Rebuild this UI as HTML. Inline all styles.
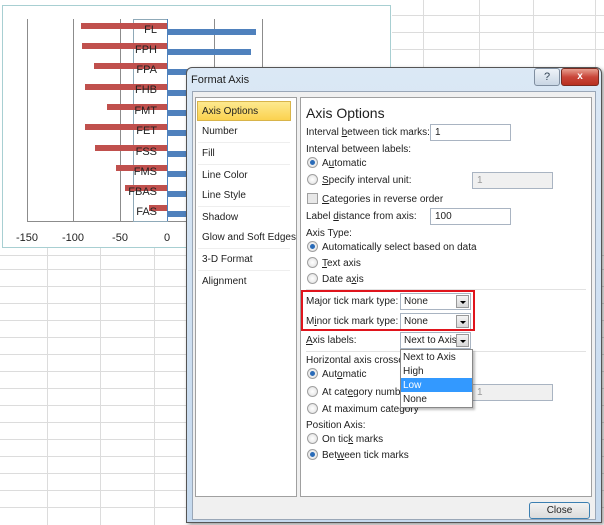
<!DOCTYPE html>
<html><head><meta charset="utf-8"><style>
*{margin:0;padding:0;box-sizing:border-box}
body{width:604px;height:525px;overflow:hidden;position:relative;background:#fff;font-family:"Liberation Sans",sans-serif;font-size:10px;color:#1e1e1e}
.a{position:absolute}
.t{position:absolute;white-space:nowrap;line-height:13px}
.rad{position:absolute;width:11px;height:11px;border-radius:50%;border:1px solid #a0a0a0;background:radial-gradient(#fff,#ddd)}
.rad.on::after{content:"";position:absolute;left:2px;top:2px;width:5px;height:5px;border-radius:50%;background:#2a6bb8}
.inp{position:absolute;border:1px solid #a9b4c2;background:#fff;height:17px;padding-left:4px;line-height:15px}
.dis{background:#f0f0f0;color:#999}
.dd{position:absolute;border:1px solid #a9b4c2;background:#fff;height:17px;padding-left:3px;line-height:15px}
.dd i{position:absolute;right:1px;top:1px;width:13px;height:13px;background:linear-gradient(#f4f4f4,#d8d8d8);border:1px solid #999}
.dd i::after{content:"";position:absolute;left:3px;top:5px;border-left:3px solid transparent;border-right:3px solid transparent;border-top:3px solid #000}
.li{position:absolute;left:202px}
</style></head><body>
<svg class="a" style="left:0;top:0" width="604" height="525">
<g stroke="#dcdcdc" stroke-width="1">
<line x1="0" y1="255.5" x2="604" y2="255.5"/>
<line x1="0" y1="269.5" x2="604" y2="269.5"/>
<line x1="0" y1="286.5" x2="604" y2="286.5"/>
<line x1="0" y1="303.5" x2="604" y2="303.5"/>
<line x1="0" y1="320.5" x2="604" y2="320.5"/>
<line x1="0" y1="337.5" x2="604" y2="337.5"/>
<line x1="0" y1="354.5" x2="604" y2="354.5"/>
<line x1="0" y1="371.5" x2="604" y2="371.5"/>
<line x1="0" y1="388.5" x2="604" y2="388.5"/>
<line x1="0" y1="405.5" x2="604" y2="405.5"/>
<line x1="0" y1="422.5" x2="604" y2="422.5"/>
<line x1="0" y1="439.5" x2="604" y2="439.5"/>
<line x1="0" y1="456.5" x2="604" y2="456.5"/>
<line x1="0" y1="473.5" x2="604" y2="473.5"/>
<line x1="0" y1="490.5" x2="604" y2="490.5"/>
<line x1="0" y1="507.5" x2="604" y2="507.5"/>
<line x1="47.5" y1="248" x2="47.5" y2="525"/>
<line x1="100.5" y1="248" x2="100.5" y2="525"/>
<line x1="154.5" y1="248" x2="154.5" y2="525"/>
<line x1="392" y1="15.5" x2="604" y2="15.5"/>
<line x1="392" y1="32.5" x2="604" y2="32.5"/>
<line x1="392" y1="49.5" x2="604" y2="49.5"/>
<line x1="423.5" y1="0" x2="423.5" y2="67"/>
<line x1="479.5" y1="0" x2="479.5" y2="67"/>
<line x1="533.5" y1="0" x2="533.5" y2="67"/>
<line x1="595.5" y1="0" x2="595.5" y2="67"/>
</g>
<rect x="2.5" y="5.5" width="388" height="242" fill="#fff" stroke="#a8cfd2"/>
<g stroke="#8c8c8c"><line x1="27.5" y1="19" x2="27.5" y2="221"/><line x1="73.5" y1="19" x2="73.5" y2="221"/><line x1="120.5" y1="19" x2="120.5" y2="221"/><line x1="214.5" y1="19" x2="214.5" y2="221"/><line x1="262.5" y1="19" x2="262.5" y2="221"/><line x1="27" y1="221.5" x2="262" y2="221.5"/></g>
<rect x="133.5" y="19.5" width="34" height="202" fill="none" stroke="#8fa9b8"/>
<g fill="#c0504d">
<rect x="81" y="23" width="86" height="6"/><rect x="82" y="43" width="85" height="6"/><rect x="94" y="63" width="73" height="6"/><rect x="85" y="84" width="82" height="6"/><rect x="107" y="104" width="60" height="6"/><rect x="85" y="124" width="82" height="6"/><rect x="95" y="145" width="72" height="6"/><rect x="116" y="165" width="51" height="6"/><rect x="125" y="185" width="42" height="6"/><rect x="149" y="205" width="18" height="6"/></g>
<g fill="#4f81bd">
<rect x="168" y="29" width="88" height="6"/><rect x="168" y="49" width="83" height="6"/><rect x="168" y="69" width="20" height="6"/><rect x="168" y="90" width="20" height="6"/><rect x="168" y="110" width="20" height="6"/><rect x="168" y="130" width="20" height="6"/><rect x="168" y="151" width="20" height="6"/><rect x="168" y="171" width="20" height="6"/><rect x="168" y="191" width="20" height="6"/><rect x="168" y="211" width="20" height="6"/></g>
<line x1="167.5" y1="19" x2="167.5" y2="221" stroke="#4f81bd" stroke-width="1"/>
<g font-family="Liberation Sans" font-size="11" fill="#222" text-anchor="end">
<text x="157" y="33">FL</text><text x="157" y="53">FPH</text><text x="157" y="73">FPA</text><text x="157" y="93">FHB</text><text x="157" y="114">FMT</text><text x="157" y="134">FET</text><text x="157" y="155">FSS</text><text x="157" y="175">FMS</text><text x="157" y="195">FBAS</text><text x="157" y="215">FAS</text></g>
<g font-family="Liberation Sans" font-size="11" fill="#222" text-anchor="middle">
<text x="27" y="241">-150</text><text x="73" y="241">-100</text><text x="120" y="241">-50</text><text x="167" y="241">0</text></g>
</svg>
<div class="a" style="left:186px;top:67px;width:416px;height:456px;background:linear-gradient(#dbe8f5,#c5d9ee);border:1px solid #555;border-radius:6px 6px 0 0;box-shadow:2px 2px 4px rgba(0,0,0,.4)"></div>
<div class="t" style="left:191px;top:74px;font-size:11px">Format Axis</div>
<div class="a" style="left:534px;top:68px;width:26px;height:18px;border:1px solid #7f8ea0;border-radius:3px;background:linear-gradient(#eef3f8,#c9d6e4);text-align:center;font-size:11px;line-height:16px;color:#345">?</div>
<div class="a" style="left:561px;top:68px;width:38px;height:18px;border:1px solid #7a2a20;border-radius:3px;background:linear-gradient(#e8a090,#c9463a 50%,#b83020);text-align:center;color:#fff;font-weight:bold;line-height:16px">x</div>
<div class="a" style="left:192px;top:91px;width:404px;height:429px;background:#f0f0f0;border:1px solid #9aa7b7"></div>
<div class="a" style="left:195px;top:97px;width:102px;height:400px;background:#fff;border:1px solid #a0a0a0"></div>
<div class="a" style="left:300px;top:97px;width:292px;height:400px;background:#fff;border:1px solid #a0a0a0"></div>
<div class="a" style="left:197px;top:101px;width:94px;height:20px;background:linear-gradient(#fde98f,#fbd24f);border:1px solid #d8b44a"></div>
<div class="t li" style="top:105px">Axis Options</div>
<div class="t li" style="top:125px">Number</div>
<div class="t li" style="top:147px">Fill</div>
<div class="t li" style="top:169px">Line Color</div>
<div class="t li" style="top:189px">Line Style</div>
<div class="t li" style="top:211px">Shadow</div>
<div class="t li" style="top:231px">Glow and Soft Edges</div>
<div class="t li" style="top:253px">3-D Format</div>
<div class="t li" style="top:275px">Alignment</div>
<div class="a" style="left:198px;top:142px;width:92px;border-top:1px solid #eee"></div>
<div class="a" style="left:198px;top:164px;width:92px;border-top:1px solid #eee"></div>
<div class="a" style="left:198px;top:206px;width:92px;border-top:1px solid #eee"></div>
<div class="a" style="left:198px;top:248px;width:92px;border-top:1px solid #eee"></div>
<div class="a" style="left:198px;top:270px;width:92px;border-top:1px solid #eee"></div>

<div class="t" style="left:306px;top:105px;font-size:14px;line-height:17px">Axis Options</div>
<div class="t" style="left:306px;top:126px">Interval <u>b</u>etween tick marks:</div>
<div class="inp" style="left:430px;top:124px;width:81px">1</div>
<div class="t" style="left:306px;top:143px">Interval between labels:</div>
<div class="rad on" style="left:307px;top:157px"></div><div class="t" style="left:322px;top:157px">A<u>u</u>tomatic</div>
<div class="rad" style="left:307px;top:174px"></div><div class="t" style="left:322px;top:174px"><u>S</u>pecify interval unit:</div>
<div class="inp dis" style="left:472px;top:172px;width:81px">1</div>
<div class="a" style="left:307px;top:193px;width:11px;height:11px;border:1px solid #a0a0a0;background:#e8e8e8"></div><div class="t" style="left:322px;top:193px"><u>C</u>ategories in reverse order</div>
<div class="t" style="left:306px;top:210px">Label <u>d</u>istance from axis:</div>
<div class="inp" style="left:430px;top:208px;width:81px">100</div>
<div class="t" style="left:306px;top:227px">Axis Type:</div>
<div class="rad on" style="left:307px;top:241px"></div><div class="t" style="left:322px;top:241px">Automatically select based on data</div>
<div class="rad" style="left:307px;top:257px"></div><div class="t" style="left:322px;top:257px"><u>T</u>ext axis</div>
<div class="rad" style="left:307px;top:273px"></div><div class="t" style="left:322px;top:273px">Date a<u>x</u>is</div>
<div class="a" style="left:306px;top:289px;width:280px;border-top:1px solid #e2e2e2"></div>
<div class="t" style="left:306px;top:295px">Major tick mark type:</div>
<div class="dd" style="left:400px;top:293px;width:71px">None<i></i></div>
<div class="t" style="left:306px;top:315px">M<u>i</u>nor tick mark type:</div>
<div class="dd" style="left:400px;top:313px;width:71px">None<i></i></div>
<div class="a" style="left:301px;top:290px;width:174px;height:41px;border:2px solid #e0141c"></div>
<div class="t" style="left:306px;top:334px"><u>A</u>xis labels:</div>
<div class="dd" style="left:400px;top:332px;width:71px">Next to Axis<i></i></div>
<div class="a" style="left:306px;top:351px;width:280px;border-top:1px solid #e2e2e2"></div>
<div class="t" style="left:306px;top:354px">Horizontal axis crosses:</div>
<div class="rad on" style="left:307px;top:368px"></div><div class="t" style="left:322px;top:368px">Aut<u>o</u>matic</div>
<div class="rad" style="left:307px;top:386px"></div><div class="t" style="left:322px;top:386px">At cat<u>e</u>gory number</div>
<div class="inp dis" style="left:472px;top:384px;width:81px">1</div>
<div class="rad" style="left:307px;top:403px"></div><div class="t" style="left:322px;top:403px">At maximum category</div>
<div class="t" style="left:306px;top:419px">Position Axis:</div>
<div class="rad" style="left:307px;top:433px"></div><div class="t" style="left:322px;top:433px">On tic<u>k</u> marks</div>
<div class="rad on" style="left:307px;top:449px"></div><div class="t" style="left:322px;top:449px">Bet<u>w</u>een tick marks</div>
<div class="a" style="left:400px;top:349px;width:73px;height:59px;background:#fff;border:1px solid #888;box-shadow:2px 2px 2px rgba(0,0,0,.25)"></div>
<div class="t" style="left:403px;top:351px">Next to Axis</div>
<div class="t" style="left:403px;top:365px">High</div>
<div class="a" style="left:401px;top:378px;width:71px;height:14px;background:#3399ff"></div>
<div class="t" style="left:403px;top:379px;color:#fff">Low</div>
<div class="t" style="left:403px;top:393px">None</div>
<div class="a" style="left:529px;top:502px;width:61px;height:17px;border:1px solid #3c7fb1;border-radius:3px;background:linear-gradient(#f2f2f2,#dcdcdc);text-align:center;line-height:15px">Close</div>
</body></html>
